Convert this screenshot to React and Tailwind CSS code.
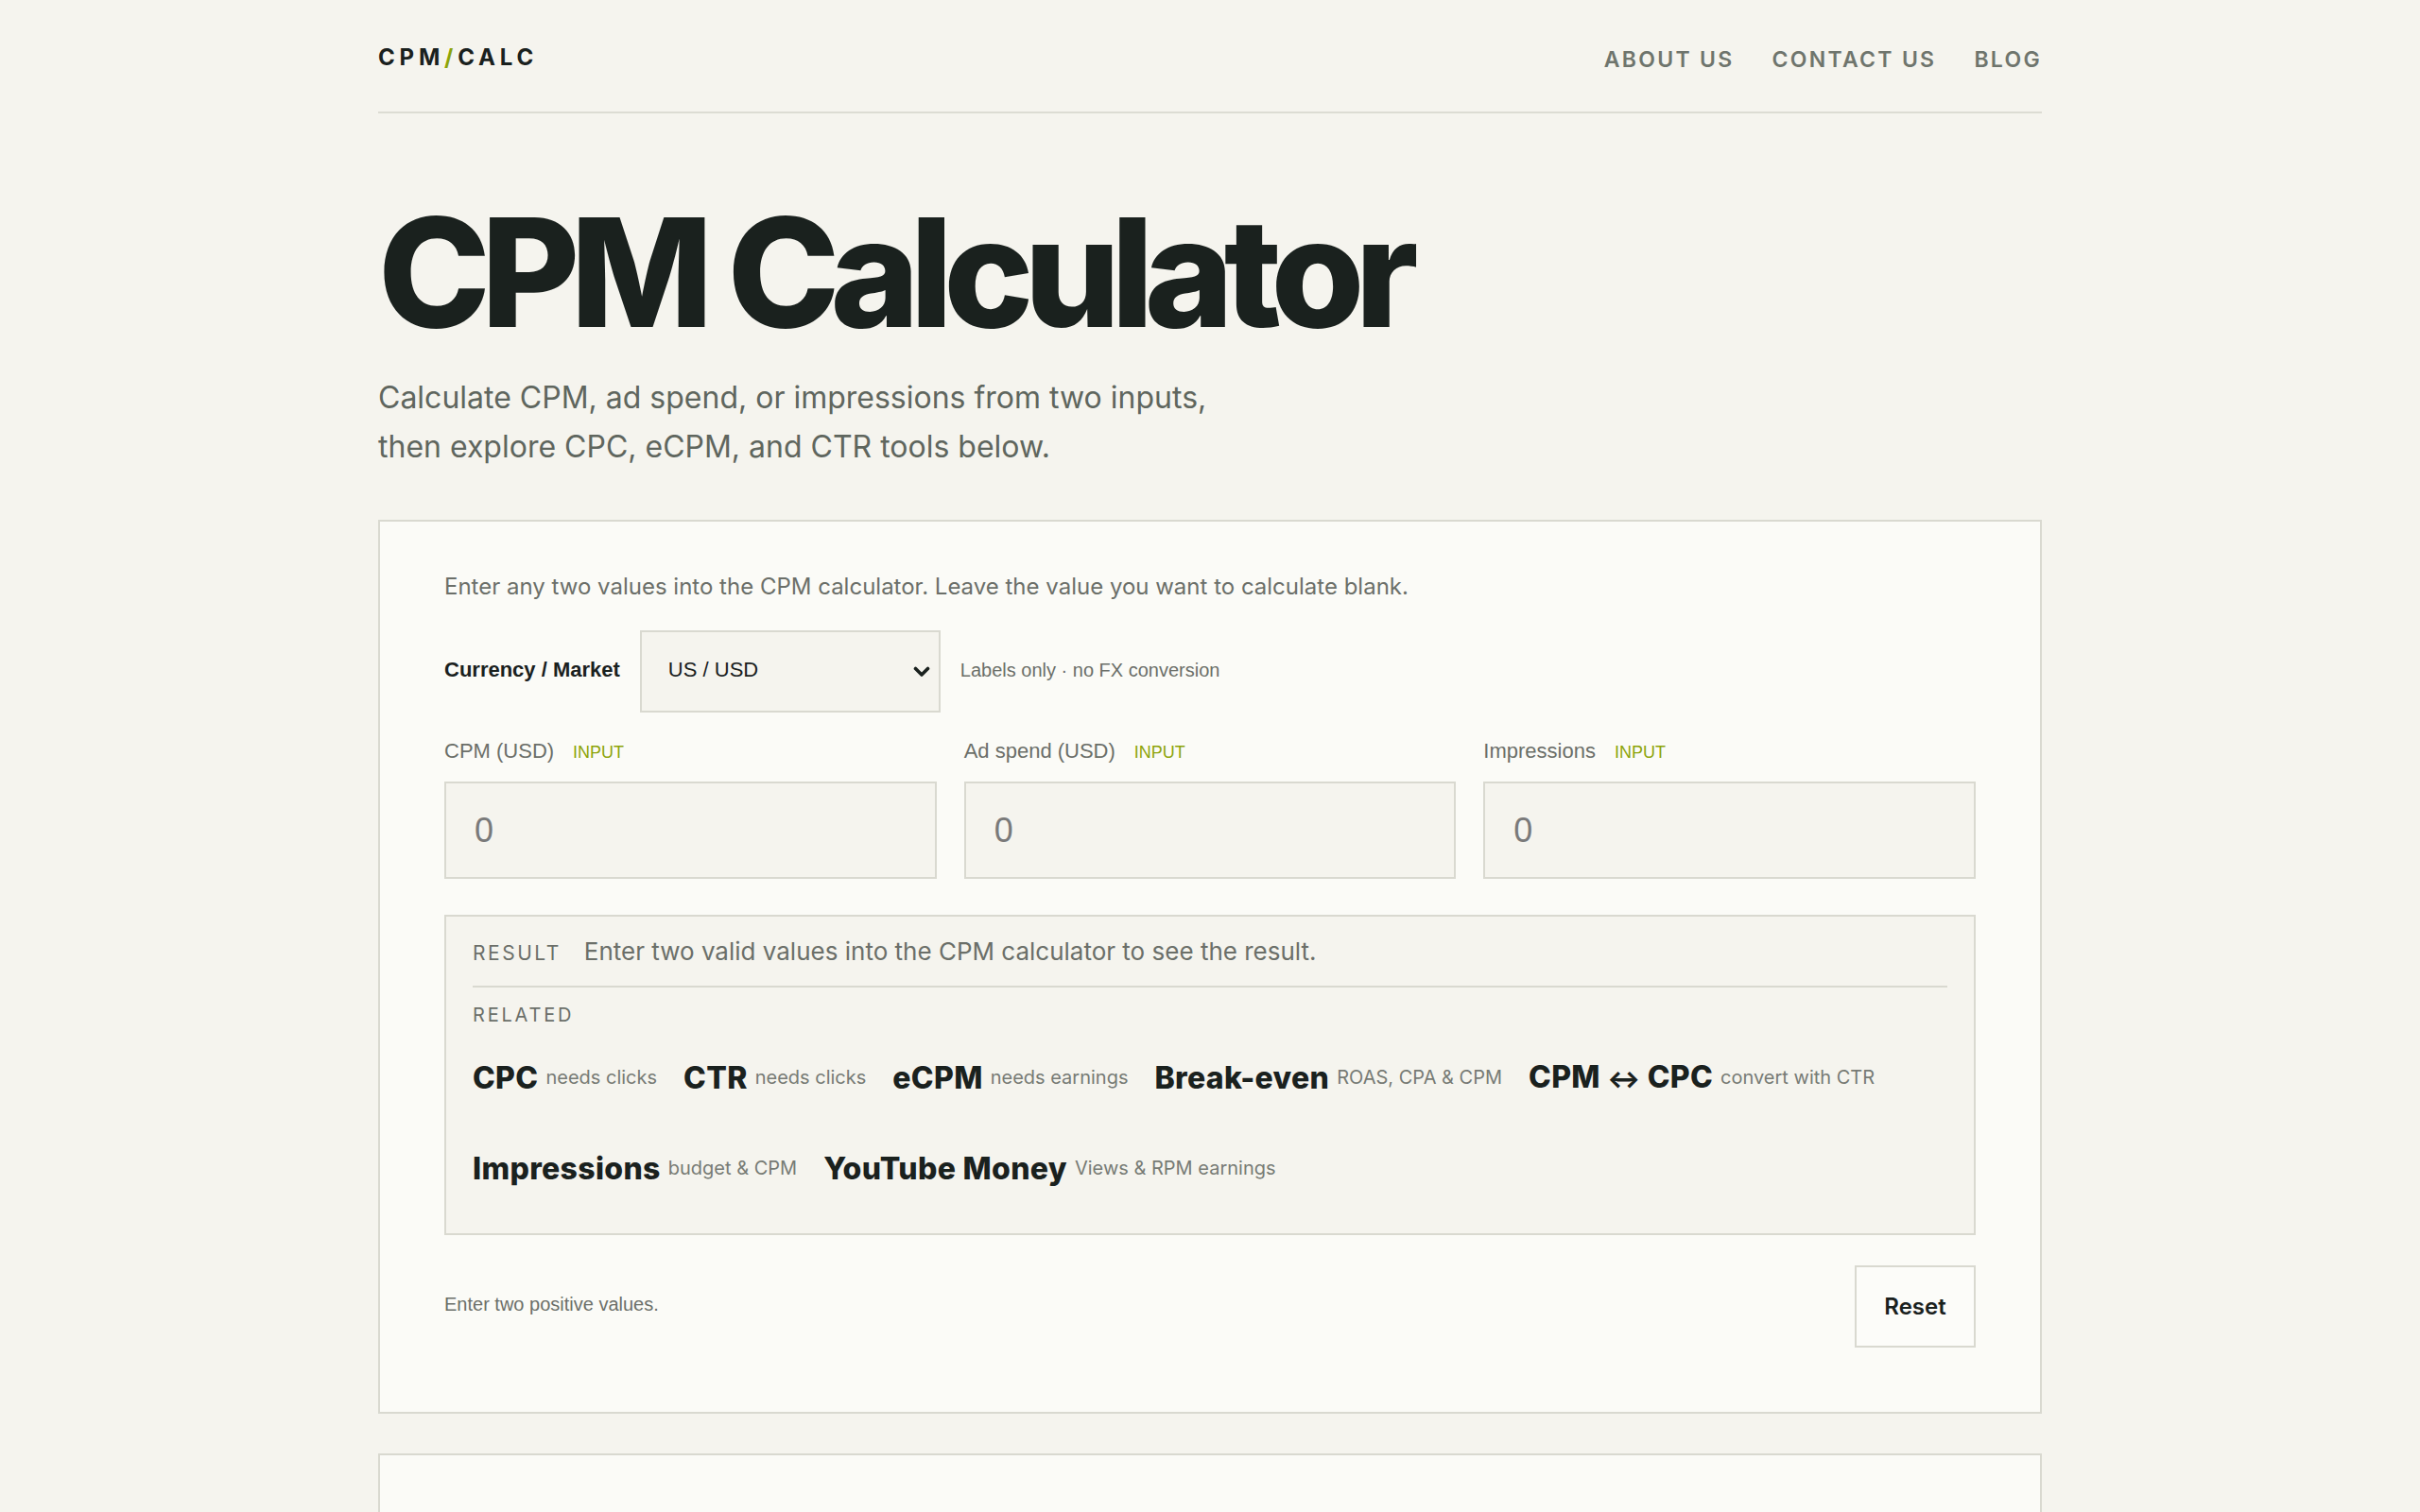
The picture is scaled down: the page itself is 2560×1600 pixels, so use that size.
import React from "react";

const inter = { fontFamily: "Inter, 'Noto Sans', sans-serif" };

function Field({ label }) {
  return (
    <div className="flex flex-col">
      <div className="flex items-baseline gap-[20px] h-[28px] font-['Liberation_Sans',Arial,sans-serif]">
        <span className="text-[22px] leading-[28px] text-[#6b6f69]">{label}</span>
        <span className="text-[18px] leading-[28px] text-[#8da40a]">INPUT</span>
      </div>
      <input
        type="text"
        placeholder="0"
        className="mt-[18px] h-[103px] w-full border-2 border-[#d9d9d0] bg-[#f5f4ee] px-[30px] text-[36px] text-[#1a211e] placeholder:text-[#7a7a7a] outline-none font-['Liberation_Sans',Arial,sans-serif]"
      />
    </div>
  );
}

function RelLink({ title, desc }) {
  return (
    <a href="#" className="flex items-center gap-[8px] h-[48px]">
      <span className="text-[32px] leading-[48px] font-extrabold text-[#1a211e] tracking-[0.01em]">{title}</span>
      <span className="text-[20px] leading-[48px] text-[#777b75] -translate-y-[1px]">{desc}</span>
    </a>
  );
}

export default function App() {
  return (
    <div className="min-h-screen w-full bg-[#f5f4ee] font-['Inter','Noto_Sans',sans-serif]" style={inter}>
      <div className="mx-auto w-[1760px]">
        <header className="flex items-center justify-between border-b-2 border-[#dcdcd3] pt-[45px] pb-[41px]">
          <div className="text-[24px] leading-[32px] font-bold tracking-[0.2em] text-[#1a211e]">
            CPM<span className="text-[#8da40a]">/</span>CALC
          </div>
          <nav className="flex items-center gap-[40px] translate-y-[2px] text-[23px] leading-[32px] font-semibold tracking-[0.1em] text-[#6f756d]">
            <a href="#">ABOUT US</a>
            <a href="#">CONTACT US</a>
            <a href="#">BLOG</a>
          </nav>
        </header>

        <h1 className="mt-[88px] text-[160px] leading-none font-extrabold tracking-[-0.062em] text-[#1a211e]">
          CPM Calculator
        </h1>
        <p className="mt-[27px] text-[32px] leading-[52px] text-[#5f665e]">
          Calculate CPM, ad spend, or impressions from two inputs,
          <br />
          then explore CPC, eCPM, and CTR tools below.
        </p>

        <section className="mt-[51px] border-2 border-[#d9d9d0] bg-[#fbfbf7] px-[68px] pt-[53px] pb-[68px]">
          <p className="text-[24px] leading-[32px] text-[#6b6f69]">
            Enter any two values into the CPM calculator. Leave the value you want to calculate blank.
          </p>

          <div className="mt-[30px] flex items-center gap-[21px] font-['Liberation_Sans',Arial,sans-serif]">
            <label className="text-[22px] font-bold text-[#1a211e] -translate-y-[2px]">Currency / Market</label>
            <div className="relative">
              <select className="h-[87px] w-[318px] appearance-none border-2 border-[#d9d9d0] bg-[#f5f4ee] pl-[28px] pb-[4px] text-[22px] text-[#1a211e] outline-none">
                <option>US / USD</option>
              </select>
              <svg
                className="pointer-events-none absolute right-[11px] top-1/2 -translate-y-1/2"
                width="18"
                height="12"
                viewBox="0 0 18 12"
                fill="none"
              >
                <path d="M2.5 2.5 L9 9 L15.5 2.5" stroke="#1a211e" strokeWidth="3.6" strokeLinecap="round" strokeLinejoin="round" />
              </svg>
            </div>
            <span className="text-[20px] text-[#6b6f69] -translate-y-[2px]">Labels only · no FX conversion</span>
          </div>

          <div className="mt-[27px] grid grid-cols-3 gap-[29px]">
            <Field label="CPM (USD)" />
            <Field label="Ad spend (USD)" />
            <Field label="Impressions" />
          </div>

          <div className="mt-[38px] border-2 border-[#d9d9d0] bg-[#f5f4ee] px-[28px] pt-[19px] pb-[44px]">
            <div className="flex items-baseline gap-[24px] h-[36px] leading-[36px]">
              <span className="text-[21px] tracking-[0.12em] text-[#6b6f69]">RESULT</span>
              <span className="text-[26px] text-[#6b6f69]">
                Enter two valid values into the CPM calculator to see the result.
              </span>
            </div>
            <div className="mt-[18px] h-[2px] bg-[#d9d9d0]" />
            <div className="mt-[15px] text-[20px] leading-[28px] tracking-[0.14em] text-[#6b6f69]">RELATED</div>
            <div className="mt-[29px] flex flex-wrap gap-x-[28px] gap-y-[48px]">
              <RelLink title="CPC" desc="needs clicks" />
              <RelLink title="CTR" desc="needs clicks" />
              <RelLink title="eCPM" desc="needs earnings" />
              <RelLink title="Break-even" desc="ROAS, CPA & CPM" />
              <RelLink
                title={
                  <>
                    CPM <span className="text-[26px]">↔</span> CPC
                  </>
                }
                desc="convert with CTR"
              />
              <RelLink title="Impressions" desc="budget & CPM" />
              <RelLink title="YouTube Money" desc="Views & RPM earnings" />
            </div>
          </div>

          <div className="mt-[32px] flex items-center justify-between">
            <span className="font-['Liberation_Sans',Arial,sans-serif] text-[20px] text-[#6b6f69] -translate-y-[3px]">
              Enter two positive values.
            </span>
            <button className="h-[87px] w-[128px] border-2 border-[#d9d9d0] bg-[#fcfcf9] text-[24px] font-semibold text-[#1a211e]">
              Reset
            </button>
          </div>
        </section>

        <section className="mt-[42px] h-[200px] border-2 border-[#d9d9d0] bg-[#fbfbf7]" />
      </div>
    </div>
  );
}
